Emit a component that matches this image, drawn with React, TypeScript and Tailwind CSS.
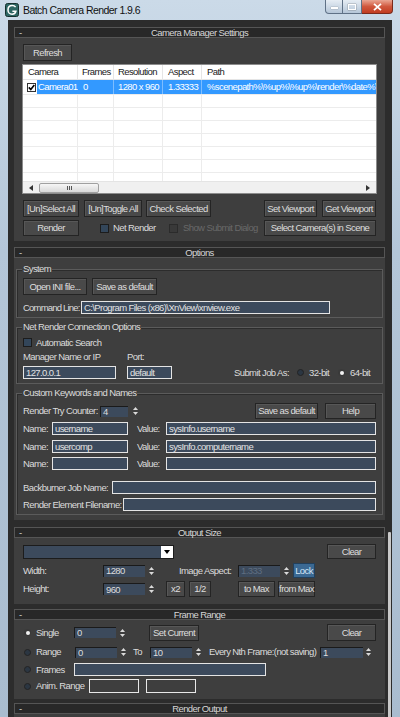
import React from "react";

type P = { className?: string; children?: React.ReactNode };

const Btn = ({ className = "", children }: P) => (
  <div
    className={`flex shrink-0 items-center justify-center whitespace-nowrap border border-[#242424] bg-[#494949] text-[#dedede] shadow-[inset_1px_1px_0_#575757] ${className}`}
  >
    {children}
  </div>
);

const Field = ({ className = "", children }: P) => (
  <div
    className={`flex shrink-0 items-center overflow-hidden whitespace-nowrap border border-[#e4e4e4] bg-[#3c4a5c] pl-[2px] text-[#e2e2e2] ${className}`}
  >
    {children}
  </div>
);

const SpinField = ({ className = "", children }: P) => (
  <div
    className={`flex shrink-0 items-center overflow-hidden whitespace-nowrap border-l border-t border-[#1a1a1a] bg-[#3c4a5c] pl-[2px] ${className}`}
  >
    {children}
  </div>
);

const Spin = ({ className = "" }: P) => (
  <div className={`flex h-[12px] w-[7px] shrink-0 flex-col items-center justify-center gap-[2px] ${className}`}>
    <svg width="5" height="3" viewBox="0 0 5 3">
      <path d="M0 3 L2.5 0 L5 3Z" fill="#dadada" />
    </svg>
    <svg width="5" height="3" viewBox="0 0 5 3">
      <path d="M0 0 L5 0 L2.5 3Z" fill="#dadada" />
    </svg>
  </div>
);

const Check = ({ disabled }: { disabled?: boolean }) => (
  <div
    className={`h-[9px] w-[9px] shrink-0 border ${
      disabled ? "border-[#2b2b2b] bg-[#393939]" : "border-[#1c1c1c] bg-[#33465a]"
    }`}
  />
);

const Radio = ({ on }: { on?: boolean }) =>
  on ? (
    <div className="flex h-[7px] w-[7px] shrink-0 items-center justify-center rounded-full bg-[#3a3a3a]">
      <div className="h-[4px] w-[4px] rounded-full bg-[#f2f2f2]" />
    </div>
  ) : (
    <div className="h-[7px] w-[7px] shrink-0 rounded-full border border-[#232323] bg-[#2b3642]" />
  );

const Group = ({ label, className = "", children }: P & { label: string }) => (
  <div className={`relative ml-[2px] w-[367px] shrink-0 border border-[#5b5b5b] shadow-[inset_1px_1px_0_#2c2c2c] ${className}`}>
    <div className="absolute left-[5px] top-[-6px] bg-[#3e3e3e] px-[1px] leading-[10px] whitespace-nowrap">{label}</div>
    {children}
  </div>
);

const Header = ({ title }: { title: string }) => (
  <div className="grid h-[11px] shrink-0 grid-cols-[20px_1fr_20px] items-center border border-[#555555] bg-[#282828] text-[#d6d6d6]">
    <span className="pl-[4px] leading-none">-</span>
    <span className="text-center leading-none">{title}</span>
    <span />
  </div>
);

const Tri = ({ dir }: { dir: "l" | "r" }) => (
  <svg width="4" height="6" viewBox="0 0 4 6">
    <path d={dir === "l" ? "M4 0 L0 3 L4 6Z" : "M0 0 L4 3 L0 6Z"} fill="#333" />
  </svg>
);

const ListView = () => (
  <div className="ml-[8px] mt-[3px] flex h-[130px] w-[355px] shrink-0 flex-col overflow-hidden border border-[#8c8c8c] bg-white text-[#1a1a1a]">
    <div className="flex h-[15px] shrink-0 border-b border-[#e5e5e5]">
      <div className="flex w-[55px] items-center border-r border-[#e5e5e5] pl-[5px]">Camera</div>
      <div className="flex w-[36px] items-center border-r border-[#e5e5e5] pl-[4px]">Frames</div>
      <div className="flex w-[49px] items-center border-r border-[#e5e5e5] pl-[4px]">Resolution</div>
      <div className="flex w-[39px] items-center border-r border-[#e5e5e5] pl-[5px]">Aspect</div>
      <div className="flex flex-1 items-center pl-[5px]">Path</div>
    </div>
    <div className="flex min-h-0 flex-1 flex-col overflow-hidden">
      <div className="flex h-[14px] shrink-0 text-white">
        <div className="flex w-[55px] items-center border-r border-[#e5e5e5] pl-[4px]">
          <div className="flex h-[9px] w-[9px] shrink-0 items-center justify-center border border-[#333] bg-white">
            <svg width="7" height="7" viewBox="0 0 7 7">
              <path d="M0.8 3.4 L2.8 5.6 L6.3 1" fill="none" stroke="#000" strokeWidth="1.6" />
            </svg>
          </div>
          <div className="ml-[1px] flex h-full flex-1 items-center whitespace-nowrap bg-[#3399ff] pl-[1px]">Camera01</div>
        </div>
        <div className="flex w-[36px] items-center border-r border-[#7dbdff] bg-[#3399ff] pl-[5px]">0</div>
        <div className="flex w-[49px] items-center whitespace-nowrap border-r border-[#7dbdff] bg-[#3399ff] pl-[4px]">1280 x 960</div>
        <div className="flex w-[39px] items-center border-r border-[#7dbdff] bg-[#3399ff] pl-[5px]">1.33333</div>
        <div className="flex min-w-0 flex-1 items-center overflow-hidden whitespace-nowrap bg-[#3399ff] pl-[5px]">
          <span className="shrink-0">%scenepath%\%up%\%up%\render\%date%\%</span>
        </div>
      </div>
      {[0, 1, 2, 3, 4, 5, 6].map((i) => (
        <div key={i} className="flex h-[13px] shrink-0 border-t border-[#ececec]">
          <div className="w-[55px] border-r border-[#ececec]" />
          <div className="w-[36px] border-r border-[#ececec]" />
          <div className="w-[49px] border-r border-[#ececec]" />
          <div className="w-[39px] border-r border-[#ececec]" />
          <div className="flex-1" />
        </div>
      ))}
    </div>
    <div className="flex h-[12px] shrink-0 items-center border-t border-[#e4e4e4] bg-[#f0f0f0]">
      <div className="flex w-[16px] items-center justify-center">
        <Tri dir="l" />
      </div>
      <div className="flex h-[10px] w-[60px] items-center justify-center gap-[1px] rounded-[2px] border border-[#a0a0a0] bg-gradient-to-b from-[#f6f6f6] to-[#d9d9d9]">
        <div className="h-[4px] w-[1px] bg-[#555]" />
        <div className="h-[4px] w-[1px] bg-[#555]" />
        <div className="h-[4px] w-[1px] bg-[#555]" />
      </div>
      <div className="flex-1" />
      <div className="flex w-[16px] items-center justify-center">
        <Tri dir="r" />
      </div>
    </div>
  </div>
);

const TitleBar = () => (
  <div className="flex h-[20px] shrink-0 items-start">
    <svg className="ml-[5px] mt-[3px] shrink-0" width="14" height="14" viewBox="0 0 14 14">
      <rect x="0.5" y="0.5" width="13" height="13" rx="2" fill="#2d6663" stroke="#15302e" />
      <path
        d="M10.6 4.2 C9.8 3 8.5 2.6 7.2 2.6 C4.6 2.6 3 4.4 3 6.9 C3 9.4 4.8 11.2 7.1 11.2 C9 11.2 10.4 10.1 10.9 8.2 H7.4"
        fill="none"
        stroke="#ffffff"
        strokeWidth="1.5"
      />
    </svg>
    <span className="ml-[4px] mt-[5px] whitespace-nowrap text-[10.5px] tracking-[-0.55px] text-[#111]">
      Batch Camera Render 1.9.6
    </span>
    <div className="ml-auto mr-[7px] flex">
      <div className="flex h-[14px] w-[18px] items-center justify-center rounded-bl-[4px] border border-t-0 border-[#5f7186] bg-gradient-to-b from-[#e6edf4] to-[#b5c6d8]">
        <div className="mt-[3px] h-[2px] w-[7px] bg-white shadow-[0_0_1px_#333]" />
      </div>
      <div className="flex h-[14px] w-[19px] items-center justify-center border border-l-0 border-t-0 border-[#5f7186] bg-gradient-to-b from-[#e6edf4] to-[#b5c6d8]">
        <div className="h-[6px] w-[8px] border-[1.5px] border-white shadow-[0_0_1px_#333]" />
      </div>
      <div className="flex h-[14px] w-[31px] items-center justify-center rounded-br-[4px] border border-l-0 border-t-0 border-[#7a2a1c] bg-gradient-to-b from-[#e9a593] via-[#d0573d] to-[#c13b20]">
        <svg width="9" height="8" viewBox="0 0 9 8">
          <path d="M1 0.8 L8 7.2 M8 0.8 L1 7.2" stroke="#fff" strokeWidth="1.8" />
        </svg>
      </div>
    </div>
  </div>
);

export default function App() {
  return (
    <div className="flex h-[717px] w-[400px] flex-col overflow-hidden bg-[linear-gradient(180deg,#cbdae8_0%,#b4c6d8_35%,#a9bccf_100%)] font-['Liberation_Sans',Arial,sans-serif] text-[9.5px] leading-none tracking-[-0.6px] text-[#dcdcdc]">
      <TitleBar />
      <div className="flex min-h-0 flex-1 px-[8px]">
        <div className="flex min-w-0 flex-1 bg-[#2c2c2c] pl-[6px]">
          <div className="flex w-[371px] shrink-0 flex-col pt-[7px]">
            {/* Camera Manager Settings */}
            <Header title="Camera Manager Settings" />
            <div className="flex h-[203px] shrink-0 flex-col bg-[#3e3e3e] pt-[6px]">
              <Btn className="ml-[9px] h-[17px] w-[49px]">Refresh</Btn>
              <ListView />
              <div className="mt-[6px] flex h-[17px] shrink-0 pl-[9px]">
                <Btn className="w-[56px]">[Un]Select All</Btn>
                <Btn className="ml-[5px] w-[58px]">[Un]Toggle All</Btn>
                <Btn className="ml-[4px] w-[65px]">Check Selected</Btn>
                <Btn className="ml-[53px] w-[53px]">Set Viewport</Btn>
                <Btn className="ml-[5px] w-[54px]">Get Viewport</Btn>
              </div>
              <div className="mt-[3px] flex h-[16px] shrink-0 items-center pl-[9px]">
                <Btn className="h-[16px] w-[56px]">Render</Btn>
                <div className="ml-[21px] flex w-[69px] shrink-0 items-center">
                  <Check />
                  <span className="ml-[4px] whitespace-nowrap">Net Render</span>
                </div>
                <div className="flex w-[95px] shrink-0 items-center">
                  <Check disabled />
                  <span className="ml-[5px] whitespace-nowrap text-[#696969]">Show Submit Dialog</span>
                </div>
                <Btn className="h-[16px] w-[112px]">Select Camera(s) in Scene</Btn>
              </div>
            </div>

            {/* Options */}
            <div className="mt-[6px]">
              <Header title="Options" />
            </div>
            <div className="flex h-[262px] shrink-0 flex-col bg-[#3e3e3e] pt-[11px]">
              <Group label="System" className="h-[49px]">
                <div className="flex flex-col pl-[6px] pt-[8px]">
                  <div className="flex h-[17px]">
                    <Btn className="w-[64px]">Open INI file...</Btn>
                    <Btn className="ml-[5px] w-[65px]">Save as default</Btn>
                  </div>
                  <div className="mt-[6px] flex h-[13px] items-center">
                    <span className="w-[58px] shrink-0 whitespace-nowrap tracking-[-0.8px]">Command Line:</span>
                    <Field className="h-[13px] w-[249px]">C:\Program Files (x86)\XnView\xnview.exe</Field>
                  </div>
                </div>
              </Group>

              <Group label="Net Render Connection Options" className="mt-[9px] h-[57px]">
                <div className="flex flex-col pl-[6px] pt-[10px]">
                  <div className="flex h-[9px] items-center">
                    <Check />
                    <span className="ml-[4px] whitespace-nowrap">Automatic Search</span>
                  </div>
                  <div className="mt-[5px] flex h-[10px] items-center">
                    <span className="w-[104px] shrink-0 whitespace-nowrap">Manager Name or IP</span>
                    <span>Port:</span>
                  </div>
                  <div className="mt-[4px] flex h-[13px] items-center">
                    <Field className="h-[13px] w-[93px]">127.0.0.1</Field>
                    <Field className="ml-[11px] h-[13px] w-[45px]">default</Field>
                    <span className="ml-[62px] w-[63px] shrink-0 whitespace-nowrap">Submit Job As:</span>
                    <div className="flex w-[41px] shrink-0 items-center">
                      <Radio />
                      <span className="ml-[5px]">32-bit</span>
                    </div>
                    <Radio on />
                    <span className="ml-[5px]">64-bit</span>
                  </div>
                </div>
              </Group>

              <Group label="Custom Keywords and Names" className="mt-[9px] h-[122px]">
                <div className="flex flex-col pl-[6px] pr-[6px] pt-[9px]">
                  <div className="flex h-[16px] items-center">
                    <span className="w-[77px] shrink-0 whitespace-nowrap">Render Try Counter:</span>
                    <SpinField className="h-[11px] w-[28px]">4</SpinField>
                    <Spin className="ml-[4px]" />
                    <Btn className="ml-auto h-[16px] w-[63px]">Save as default</Btn>
                    <Btn className="ml-[7px] h-[16px] w-[51px]">Help</Btn>
                  </div>
                  <div className="mt-[3px] flex h-[13px] items-center">
                    <span className="w-[29px] shrink-0">Name:</span>
                    <Field className="h-[13px] w-[76px]">username</Field>
                    <span className="ml-[9px] w-[29px] shrink-0">Value:</span>
                    <Field className="h-[13px] flex-1">sysInfo.username</Field>
                  </div>
                  <div className="mt-[5px] flex h-[13px] items-center">
                    <span className="w-[29px] shrink-0">Name:</span>
                    <Field className="h-[13px] w-[76px]">usercomp</Field>
                    <span className="ml-[9px] w-[29px] shrink-0">Value:</span>
                    <Field className="h-[13px] flex-1">sysInfo.computername</Field>
                  </div>
                  <div className="mt-[4px] flex h-[13px] items-center">
                    <span className="w-[29px] shrink-0">Name:</span>
                    <Field className="h-[13px] w-[76px]" />
                    <span className="ml-[9px] w-[29px] shrink-0">Value:</span>
                    <Field className="h-[13px] flex-1" />
                  </div>
                  <div className="mt-[11px] flex h-[13px] items-center">
                    <span className="w-[89px] shrink-0 whitespace-nowrap">Backburner Job Name:</span>
                    <Field className="h-[13px] flex-1" />
                  </div>
                  <div className="mt-[4px] flex h-[13px] items-center">
                    <span className="w-[100px] shrink-0 whitespace-nowrap">Render Element Filename:</span>
                    <Field className="h-[13px] flex-1" />
                  </div>
                </div>
              </Group>
            </div>

            {/* Output Size */}
            <div className="mt-[7px]">
              <Header title="Output Size" />
            </div>
            <div className="flex h-[66px] shrink-0 flex-col bg-[#3e3e3e] pl-[9px] pr-[9px] pt-[6px]">
              <div className="flex h-[15px] items-center">
                <div className="flex h-[14px] w-[151px] shrink-0 justify-end border border-[#1c1c1c] bg-[#3c4a5c]">
                  <div className="flex w-[12px] items-center justify-center bg-white">
                    <svg width="6" height="4" viewBox="0 0 6 4">
                      <path d="M0 0 L6 0 L3 4Z" fill="#000" />
                    </svg>
                  </div>
                </div>
                <Btn className="ml-auto h-[15px] w-[49px]">Clear</Btn>
              </div>
              <div className="mt-[4px] flex h-[15px] items-center">
                <span className="w-[80px] shrink-0">Width:</span>
                <SpinField className="h-[12px] w-[42px]">1280</SpinField>
                <Spin className="ml-[3px]" />
                <span className="ml-[24px] w-[59px] shrink-0 whitespace-nowrap">Image Aspect:</span>
                <SpinField className="h-[12px] w-[42px] text-[#5f6e80]">1.333</SpinField>
                <Spin className="ml-[3px]" />
                <div className="ml-[3px] flex h-[15px] w-[22px] shrink-0 items-center justify-center border border-[#22405c] bg-[#3b6993] text-[#d4e6f6]">
                  Lock
                </div>
              </div>
              <div className="mt-[3px] flex h-[16px] items-center">
                <span className="w-[80px] shrink-0">Height:</span>
                <SpinField className="h-[12px] w-[42px]">960</SpinField>
                <Spin className="ml-[3px]" />
                <Btn className="ml-[11px] h-[16px] w-[19px]">x2</Btn>
                <Btn className="ml-[4px] h-[16px] w-[22px]">1/2</Btn>
                <Btn className="ml-[27px] h-[16px] w-[37px]">to Max</Btn>
                <Btn className="ml-[3px] h-[16px] w-[37px]">from Max</Btn>
              </div>
            </div>

            {/* Frame Range */}
            <div className="mt-[5px]">
              <Header title="Frame Range" />
            </div>
            <div className="flex h-[79px] shrink-0 flex-col bg-[#3e3e3e] pl-[10px] pr-[9px] pt-[3px]">
              <div className="flex h-[19px] items-center">
                <div className="flex w-[50px] shrink-0 items-center">
                  <Radio on />
                  <span className="ml-[5px]">Single</span>
                </div>
                <SpinField className="h-[11px] w-[42px]">0</SpinField>
                <Spin className="ml-[3px]" />
                <Btn className="ml-[23px] h-[16px] w-[50px]">Set Current</Btn>
                <Btn className="ml-auto h-[17px] w-[49px]">Clear</Btn>
              </div>
              <div className="mt-[4px] flex h-[12px] items-center">
                <div className="flex w-[51px] shrink-0 items-center">
                  <Radio />
                  <span className="ml-[5px]">Range</span>
                </div>
                <SpinField className="h-[11px] w-[42px]">0</SpinField>
                <Spin className="ml-[3px]" />
                <span className="ml-[6px] w-[17px] shrink-0">To</span>
                <SpinField className="h-[11px] w-[42px]">10</SpinField>
                <Spin className="ml-[3px]" />
                <span className="ml-[7px] w-[111px] shrink-0 whitespace-nowrap">Every Nth Frame:(not saving)</span>
                <SpinField className="h-[11px] w-[43px]">1</SpinField>
                <Spin className="ml-[2px]" />
              </div>
              <div className="mt-[5px] flex h-[13px] items-center">
                <div className="flex w-[50px] shrink-0 items-center">
                  <Radio />
                  <span className="ml-[5px]">Frames</span>
                </div>
                <Field className="h-[13px] w-[192px]" />
              </div>
              <div className="mt-[3px] flex h-[14px] items-center">
                <div className="flex w-[65px] shrink-0 items-center">
                  <Radio />
                  <span className="ml-[5px] whitespace-nowrap">Anim. Range</span>
                </div>
                <div className="h-[14px] w-[50px] shrink-0 border border-[#e8e8e8]" />
                <div className="ml-[7px] h-[14px] w-[50px] shrink-0 border border-[#e8e8e8]" />
              </div>
            </div>

            {/* Render Output */}
            <div className="mt-[4px]">
              <Header title="Render Output" />
            </div>
            <div className="flex-1 bg-[#3e3e3e]" />
          </div>
          <div className="flex flex-1 flex-col pl-[3px]">
            <div className="mt-[512px] w-[3px] flex-1 rounded-t-[1px] bg-[#c9c9c9]" />
          </div>
        </div>
      </div>
    </div>
  );
}
